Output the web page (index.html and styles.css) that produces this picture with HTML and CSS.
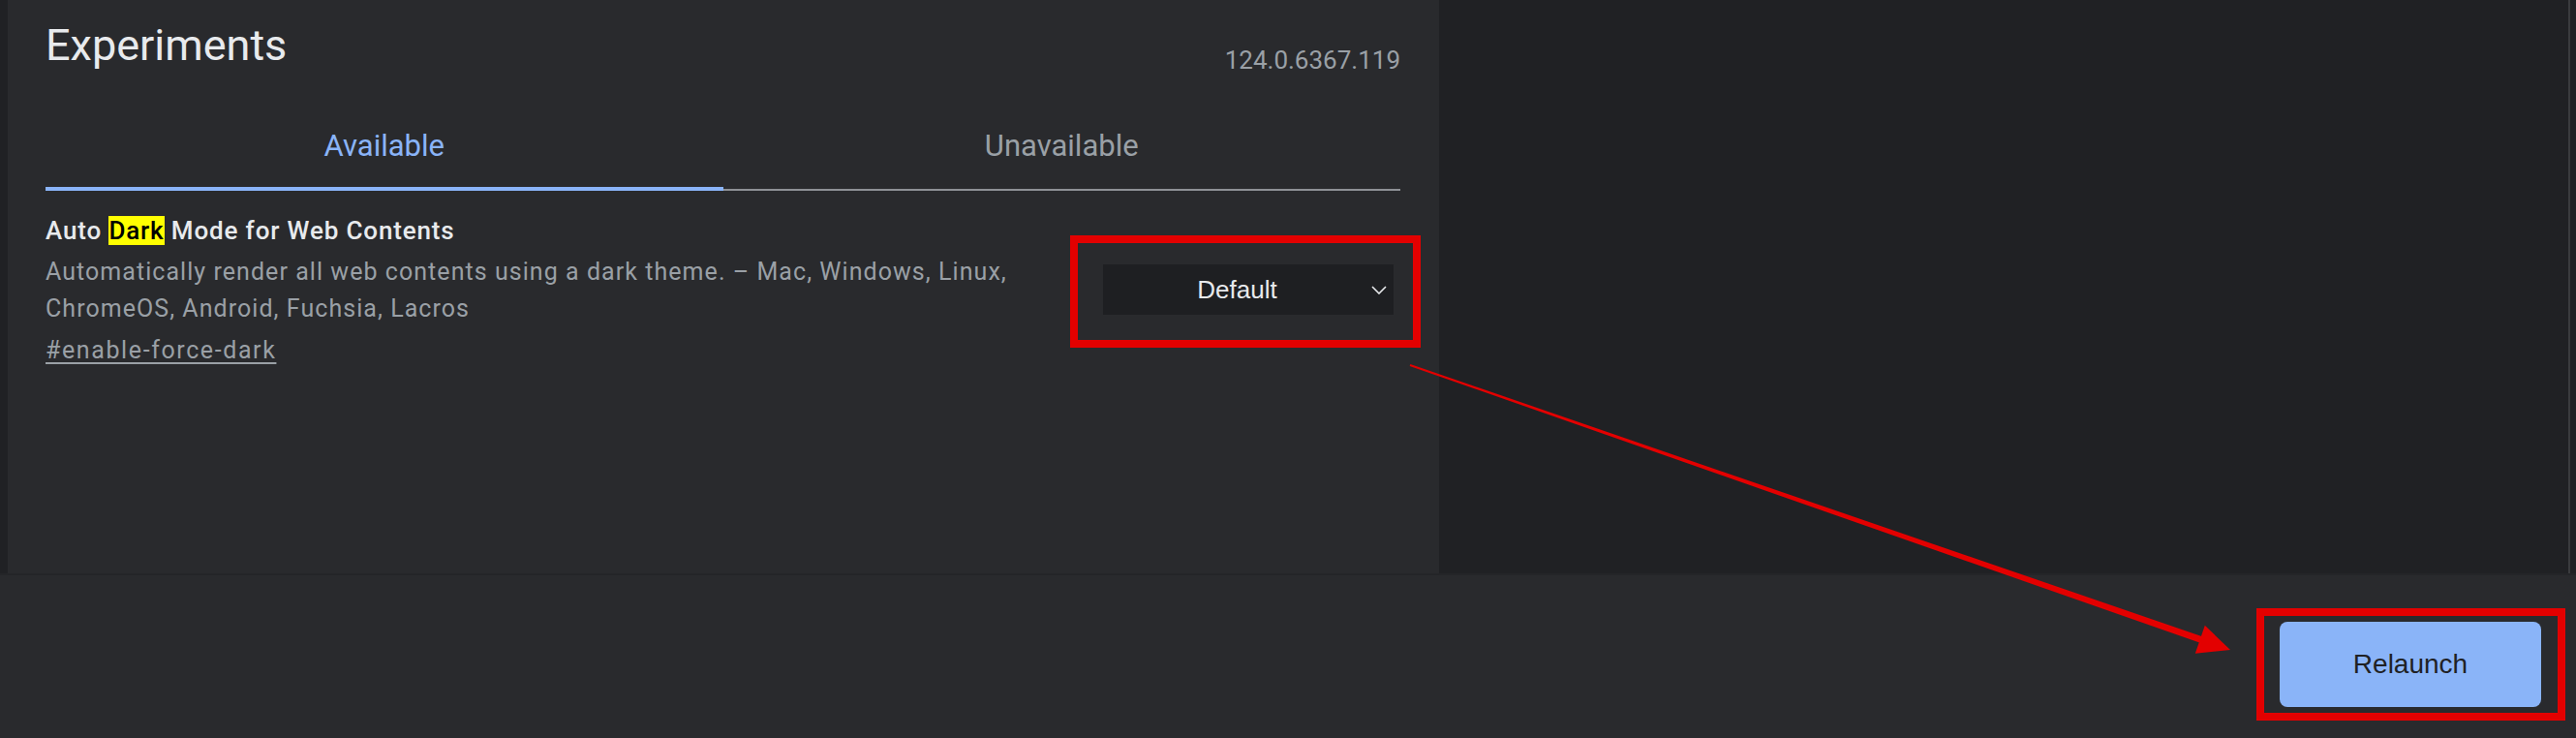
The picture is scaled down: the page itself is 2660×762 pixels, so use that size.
FILE: index.html
```html
<!DOCTYPE html>
<html lang="en">
<head>
  <meta charset="UTF-8" />
  <title>Experiments</title>
  <link rel="stylesheet" href="styles.css">
</head>
<body>

  <!-- ==== TOP AREA: flags panel + empty side ==== -->
  <div class="main">
    <div class="panel">
      <div class="header">
        <h1 class="title">Experiments</h1>
        <span class="version">124.0.6367.119</span>
      </div>

      <div class="tabs">
        <div class="tab active">Available</div>
        <div class="tab">Unavailable</div>
      </div>

      <div class="flag">
        <div class="flag-text">
          <h2 class="flag-name">Auto <mark class="hl">Dark</mark> Mode for Web Contents</h2>
          <p class="flag-desc">Automatically render all web contents using a dark theme. – Mac, Windows, Linux, ChromeOS, Android, Fuchsia, Lacros</p>
          <a class="flag-link" href="#enable-force-dark">#enable-force-dark</a>
        </div>
        <div class="select">
          <span class="select-value">Default</span>
          <svg class="chevron" width="16" height="9" viewBox="0 0 16 9" aria-hidden="true">
            <path d="M1 1 L8 8 L15 1" fill="none" stroke="currentColor" stroke-width="1.6" />
          </svg>
        </div>
      </div>
    </div>
    <div class="side"></div>
  </div>

  <!-- ==== BOTTOM BAR ==== -->
  <div class="footer">
    <button class="relaunch" type="button">Relaunch</button>
  </div>

  <!-- ==== ANNOTATIONS drawn over the screenshot ==== -->
  <div class="mark-box box-select"></div>
  <div class="mark-box box-relaunch"></div>
  <svg class="arrow" width="2660" height="762" viewBox="0 0 2660 762" aria-hidden="true">
    <polygon points="1456.3,376.1 2279.2,659 2276.9,665.6 1455.7,377.9" fill="#e30000" />
    <polygon points="2303,671 2276.8,645.8 2266.8,674.7" fill="#e30000" />
  </svg>

</body>
</html>
```

FILE: styles.css
```css
/* Reset */
* {
  margin: 0;
  padding: 0;
  box-sizing: border-box;
}

html, body {
  width: 2660px;
  height: 762px;
  overflow: hidden;
}

body {
  position: relative;
  display: flex;
  flex-direction: column;
  background: #292a2d;
  font-family: Roboto, "Noto Sans", sans-serif;
  color: #e8eaed;
}

/* Top area */
.main {
  display: flex;
  height: 594px;
  padding: 0 6px 0 8px;
  background: #202124;
  border-bottom: 2px solid #242528;
}

.panel {
  width: 1478px;
  background: #292a2d;
  padding: 21px 40px 0 39px;
}

.side {
  flex: 1;
  border-right: 2px solid #3a3b3e;
}

/* Header */
.header {
  display: flex;
  justify-content: space-between;
  align-items: flex-start;
}

.title {
  font-size: 45px;
  line-height: 52px;
  font-weight: 400;
  color: #e8eaed;
}

.version {
  padding-top: 26px;
  font-size: 26px;
  line-height: 30px;
  color: #9aa0a6;
}

/* Tabs */
.tabs {
  display: flex;
  margin-top: 56px;
  border-bottom: 2px solid #8e9196;
}

.tab {
  flex: 1;
  text-align: center;
  font-size: 31px;
  line-height: 36px;
  padding-bottom: 24px;
  color: #9aa0a6;
}

.tab.active {
  color: #8ab4f8;
  border-bottom: 4px solid #8ab4f8;
  margin-bottom: -2px;
}

/* Flag row */
.flag {
  display: flex;
  align-items: flex-start;
  margin-top: 25px;
}

.flag-text {
  flex: 1;
}

.flag-name {
  font-size: 26px;
  line-height: 32px;
  font-weight: 500;
  letter-spacing: 0.85px;
  color: #e8eaed;
}

.hl {
  background: #ffff00;
  color: #000;
}

.flag-desc {
  margin-top: 8px;
  font-size: 25px;
  line-height: 38px;
  letter-spacing: 1.05px;
  color: #9aa0a6;
}

.flag-link {
  display: inline-block;
  margin-top: 5px;
  font-size: 25px;
  line-height: 38px;
  letter-spacing: 1.6px;
  color: #9aa0a6;
  text-decoration: underline;
  text-decoration-thickness: 2px;
  text-underline-offset: 4px;
}

/* Dropdown */
.select {
  display: flex;
  align-items: center;
  width: 300px;
  height: 52px;
  margin: 51px 7px 0 32px;
  padding-right: 7px;
  background: #1e1f22;
  color: #e8eaed;
  font-family: "Liberation Sans", Arial, sans-serif;
  font-size: 26px;
}

.select-value {
  flex: 1;
  text-align: center;
}

.chevron {
  flex-shrink: 0;
}

/* Bottom bar */
.footer {
  flex: 1;
  display: flex;
  justify-content: flex-end;
  align-items: flex-start;
  padding: 48px 36px 0 0;
  background: #292a2d;
}

.relaunch {
  width: 270px;
  height: 88px;
  border: none;
  border-radius: 8px;
  background: #8ab4f8;
  color: #202124;
  font-family: "Liberation Sans", Arial, sans-serif;
  font-size: 28px;
}

/* Red annotation boxes and arrow */
.mark-box {
  position: absolute;
  border: 8px solid #e30000;
}

.box-select {
  left: 1105px;
  top: 243px;
  width: 362px;
  height: 116px;
}

.box-relaunch {
  left: 2330px;
  top: 628px;
  width: 319px;
  height: 116px;
}

.arrow {
  position: absolute;
  left: 0;
  top: 0;
}
```
